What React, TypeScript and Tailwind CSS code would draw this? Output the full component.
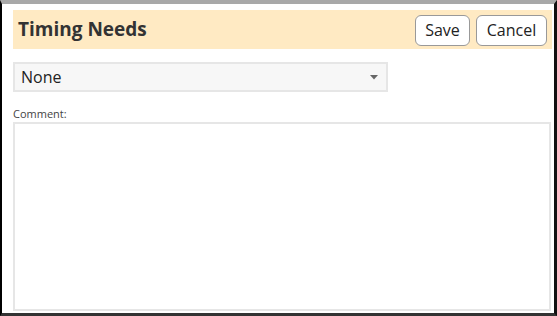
import React from 'react'

const font = { fontFamily: '"Open Sans", "Noto Sans", Arial, sans-serif' }

export default function App() {
  return (
    <div
      className="w-[557px] h-[316px] bg-white border-l-2 border-r-[3px] border-l-black border-r-[#111] border-t-[4px] border-t-[#a8a8a8] border-b-[3px] border-b-[#333] overflow-hidden"
      style={font}
    >
      <div className="pl-[11px] pr-[2px] pt-[6px]">
        {/* Header */}
        <div className="h-[39px] bg-[#ffeac3] flex items-center justify-between pl-[5px] pr-[5px]">
          <h2 className="text-[19px] font-bold text-[#333]">Timing Needs</h2>
          <div className="flex gap-[6px] pt-[1px]">
            <button className="h-[31px] w-[55px] bg-white border border-[#999] rounded-[6px] text-[16px] text-[#222]">
              Save
            </button>
            <button className="h-[31px] w-[71px] bg-white border border-[#999] rounded-[6px] text-[16px] text-[#222]">
              Cancel
            </button>
          </div>
        </div>

        {/* Select */}
        <div className="mt-[13px] w-[375px] h-[30px] bg-[#f7f7f7] border-2 border-[#e6e6e6] flex items-center justify-between pl-[6px] pr-[8px]">
          <span className="text-[16px] text-[#222]">None</span>
          <svg width="8" height="5" viewBox="0 0 8 5">
            <path d="M0 0 L8 0 L4 4.5 Z" fill="#666" />
          </svg>
        </div>

        {/* Comment */}
        <div className="mt-[15px] text-[11px] leading-[14px] text-[#444]">Comment:</div>
        <div className="mt-[1px] w-[538px] h-[189px] border-2 border-[#e6e6e6] bg-white" />
      </div>
    </div>
  )
}
